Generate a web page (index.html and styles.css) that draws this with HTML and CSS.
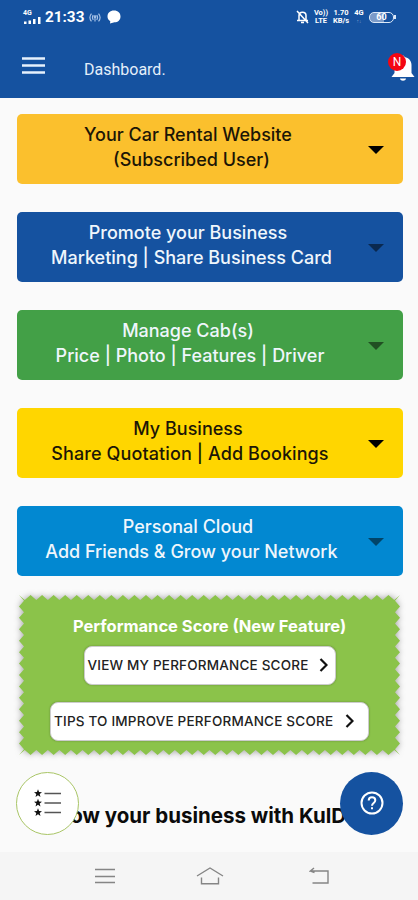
FILE: index.html
```
<!DOCTYPE html>
<html>
<head>
	<title>Dashboard</title>
	<meta charset="utf-8">
	<link rel="stylesheet" href="styles.css">
</head>

<body>
	<div class="top">
		<div class="status">
			<div class="signal">
				<span>4G</span>
				<svg width="19" height="7" viewBox="0 0 19 7"><path d="M1 4.500h2.500V7H1zM5.500 3.500H8V7H5.500zM10 2h2.500v5H10zM15 0h2.500v7H15z" fill="#fff"/></svg>
			</div>
			<span class="clock">21:33</span>
			<svg class="hotspot" width="14" height="11" viewBox="0 0 15 14" fill="none" stroke="#a9c4e8" stroke-width="1.500"><path d="M3 2Q-1 7 3 12M5.300 4Q3.300 7 5.300 10M12 2q4 5 0 10M9.700 4q2 3 0 6M7.500 6v6"/><circle cx="7.500" cy="6" r="1"/></svg>
			<svg width="14" height="14" viewBox="0 0 14 14"><path d="M7 0.500c4 0 6.500 2.500 6.500 6S11 12.300 7.500 12.300L3 13.500l.3-2.300C1.500 10 .5 8.500.5 6.500.5 3 3 .5 7 .5z" fill="#fff"/></svg>
			<div class="status-right">
				<svg width="13" height="14" viewBox="0 0 13 14" fill="none" stroke="#fff" stroke-width="1.500"><path d="M3 10V5.500C3 1 10 1 10 5.500V10M1 10.500h11M5 12.500h3M1 1l11 12"/></svg>
				<span class="tiny volte">Vo))<br>LTE</span>
				<span class="tiny speed">1.70<br>KB/s</span>
				<span class="tiny net">4G<br><i>&uarr;&darr;</i></span>
				<div class="battery"><span>60</span></div>
				<i class="cap"></i>
			</div>
		</div>
		<div class="bar">
			<svg class="menu" width="23" height="17" viewBox="0 0 23 17"><path d="M0 1.500h23M0 8.500h23M0 15.500h23" stroke="#e6f1fc" stroke-width="2.500"/></svg>
			<span class="title">Dashboard.</span>
			<div class="bell">
				<svg width="24" height="28" viewBox="0 0 24 28" fill="#fff"><path d="M10.500 3a1.500 1.500 0 0 1 3 0c4.500.8 7 4 7 8v8l3 4H.5l3-4v-8c0-4 2.500-7.200 7-8zM9 24.500h6c-.3 3-5.700 3-6 0z"/></svg>
				<span class="badge">N</span>
			</div>
		</div>
	</div>

	<div class="cards">
		<div class="card amber"><p>Your Car Rental Website<br><span class="sub">(Subscribed User)</span></p><i class="caret"></i></div>
		<div class="card navy"><p>Promote your Business<br><span class="sub">Marketing | Share Business Card</span></p><i class="caret"></i></div>
		<div class="card green"><p>Manage Cab(s)<br><span class="sub near">Price | Photo | Features | Driver</span></p><i class="caret"></i></div>
		<div class="card yellow"><p>My Business<br><span class="sub near wide">Share Quotation | Add Bookings</span></p><i class="caret"></i></div>
		<div class="card sky"><p>Personal Cloud<br><span class="sub">Add Friends &amp; Grow your Network</span></p><i class="caret"></i></div>
	</div>

	<div class="score">
		<svg class="stamp" width="381" height="160" viewBox="0 0 381 160"><path id="stamp" fill="#8bc34a"/></svg>
		<h2>Performance Score (New Feature)</h2>
		<button class="view"><span>VIEW MY PERFORMANCE SCORE</span><svg width="9" height="14" viewBox="0 0 9 14"><path d="M1.500 1l6 6-6 6" fill="none" stroke="#111" stroke-width="2.200"/></svg></button>
		<button class="tips"><span>TIPS TO IMPROVE PERFORMANCE SCORE</span><svg width="9" height="14" viewBox="0 0 9 14"><path d="M1.500 1l6 6-6 6" fill="none" stroke="#111" stroke-width="2.200"/></svg></button>
	</div>

	<div class="grow">
		<h3>Grow your business with KulD</h3>
		<div class="fab list">
			<svg width="28" height="28" viewBox="0 0 28 28"><path id="stars" fill="#111"/><path d="M10.500 4.500H27M10.500 14H27M10.500 23.500H27" stroke="#555" stroke-width="1.500"/></svg>
		</div>
		<div class="fab help">
			<svg width="24" height="24" viewBox="0 0 24 24" fill="none" stroke="#fff" stroke-width="2"><circle cx="12" cy="12" r="10.500"/><path d="M8.700 9.500c0-4.500 6.600-4.300 6.600-.2 0 2.700-3.300 2.700-3.300 5.500M12 16.300v2"/></svg>
		</div>
	</div>

	<div class="nav">
		<svg width="20" height="16" viewBox="0 0 20 16"><path d="M0 1.500h20M0 8.500h20M0 14.500h20" stroke="#858585" stroke-width="1.500"/></svg>
		<svg width="28" height="18" viewBox="0 0 28 18" fill="none" stroke="#858585" stroke-width="1.400"><path d="M1 9L14 1l13 8M5.500 10.500v6.300h17v-6.300"/></svg>
		<svg width="20" height="18" viewBox="0 0 20 18" fill="none" stroke="#858585" stroke-width="1.400"><path d="M5 1L1.500 4H19v12H3.500M1.500 4l4 1.500"/></svg>
	</div>

<script>
// zigzag edge of the score box
var w = 381, h = 160, nx = 33, ny = 14, depth = 5;
var d = "M0 0", i, sx = w/nx/2, sy = h/ny/2;
for(i=0; i<nx; i++) d += "l" + sx + " " + depth + "l" + sx + " " + (-depth);
for(i=0; i<ny; i++) d += "l" + (-depth) + " " + sy + "l" + depth + " " + sy;
for(i=0; i<nx; i++) d += "l" + (-sx) + " " + (-depth) + "l" + (-sx) + " " + depth;
for(i=0; i<ny; i++) d += "l" + depth + " " + (-sy) + "l" + (-depth) + " " + (-sy);
document.getElementById("stamp").setAttribute("d", d + "z");

// three list stars
var s = "", y, k, r, a;
for(y=4.5; y<28; y+=9.5){
	for(k=0; k<10; k++){
		r = k%2 ? 1.8 : 4.2;
		a = Math.PI*(k/5 - 0.5);
		s += (k ? "L" : "M") + (4 + r*Math.cos(a)) + " " + (y + r*Math.sin(a));
	}
	s += "z";
}
document.getElementById("stars").setAttribute("d", s);
</script>

</body>
</html>
```
FILE: styles.css
```
body {
	margin:0;
	width:418px;
	height:900px;
	overflow:hidden;
	background:#fafafa;
	font-family:Inter, "Liberation Sans", sans-serif;
	display:flex;
	flex-direction:column;
}

p, h2, h3 {
	margin:0;
}

svg {
	display:block;
	flex:none;
}

.top {
	height:98px;
	background:#1552a0;
	color:#fff;
	font-family:Roboto, sans-serif;
	flex:none;
}

.status {
	height:34px;
	display:flex;
	align-items:center;
	padding:0 22px 0 23px;
}

.signal {
	width:22px;
	font-size:7px;
	line-height:7px;
	font-weight:bold;
}

.clock {
	font-size:15.3px;
	font-weight:bold;
	width:43px;
}

.hotspot {
	margin-right:5px;
}

.status-right {
	margin-left:auto;
	display:flex;
	align-items:center;
}

.tiny {
	font-size:7.5px;
	line-height:8px;
	font-weight:bold;
	text-align:center;
}

.tiny i {
	font-size:5px;
	font-style:normal;
	color:#7f9fcf;
}

.volte {
	width:16px;
	margin-left:4px;
}

.speed {
	width:18px;
	margin-left:3px;
}

.net {
	width:10px;
	margin:0 5px 0 4px;
}

.battery {
	width:23px;
	height:9px;
	border:1.5px solid #dce9f8;
	border-radius:5px;
	background:linear-gradient(90deg, #7b9bc9 60%, #1552a0 60%);
	font-size:9px;
	line-height:9px;
	font-weight:bold;
	text-align:center;
}

.cap {
	width:2px;
	height:4px;
	background:#dce9f8;
}

.bar {
	height:64px;
	display:flex;
	align-items:center;
	padding-left:22px;
}

.menu {
	margin-top:-1px;
}

.title {
	margin:6px 0 0 39px;
	font-size:16px;
	color:#e4effa;
}

.bell {
	position:relative;
	margin:4px 3px 0 auto;
}

.badge {
	position:absolute;
	left:-3px;
	top:-1px;
	width:18px;
	height:18px;
	border-radius:50%;
	background:#f40612;
	font-size:12px;
	line-height:18px;
	text-align:center;
}

.cards {
	margin:16.4px 15px 0 16.5px;
	display:flex;
	flex-direction:column;
	gap:28px;
}

.card {
	height:70px;
	border-radius:5px;
	display:flex;
	align-items:center;
	color:#eff6fc;
	font-size:18px;
	line-height:25px;
	font-weight:500;
}

.card p {
	width:343px;
	height:56px;
	padding-top:1px;
	box-sizing:border-box;
	text-align:center;
	white-space:nowrap;
}

.sub {
	padding-left:7px;
}

.near {
	padding-left:4px;
}

.wide {
	letter-spacing:.1px;
}

.caret {
	margin-left:8px;
	margin-top:2px;
	border:8px solid transparent;
	border-top-color:#000;
	border-bottom:0;
	opacity:.5;
}

.amber {
	background:#fbc02d;
	color:#1c1606;
}

.navy {
	background:#1552a0;
}

.green {
	background:#43a047;
}

.yellow {
	background:#ffd600;
	color:#1c1606;
}

.sky {
	background:#0288d1;
}

.amber .caret, .yellow .caret {
	opacity:1;
}

.score {
	position:relative;
	width:381px;
	height:160px;
	margin:18.6px 0 0 19px;
	display:flex;
	flex-direction:column;
	align-items:center;
	flex:none;
}

.stamp {
	position:absolute;
	left:0;
	top:0;
	overflow:visible;
	filter:drop-shadow(0 0 3px rgba(0,0,0,.35));
}

.score h2 {
	position:relative;
	margin-top:20px;
	font-size:16.5px;
	line-height:22px;
	color:#fff;
	white-space:nowrap;
}

.score button {
	position:relative;
	height:39px;
	box-sizing:border-box;
	border:1px solid #ccc;
	border-radius:8px;
	background:#fff;
	box-shadow:0 0 2px rgba(0,0,0,.3);
	display:flex;
	align-items:center;
	justify-content:space-between;
	padding:0 7px 0 3px;
	font:500 13.5px Inter, sans-serif;
	letter-spacing:.2px;
	color:#222;
	white-space:nowrap;
}

.score .view {
	width:252px;
	margin-top:9px;
}

.score .tips {
	width:319px;
	margin-top:17px;
	padding-right:14px;
}

.grow {
	position:relative;
	height:97px;
	flex:none;
}

.grow h3 {
	padding:48px 0 0 47px;
	font-size:20.5px;
	line-height:26px;
	white-space:nowrap;
	color:#0b0b0b;
}

.fab {
	position:absolute;
	top:17px;
	width:63px;
	height:63px;
	box-sizing:border-box;
	border-radius:50%;
	display:flex;
	align-items:center;
	justify-content:center;
}

.list {
	left:16px;
	background:#fff;
	border:1.5px solid #a9c566;
}

.help {
	left:340px;
	background:#1552a0;
}

.nav {
	height:48px;
	background:#f5f5f5;
	display:flex;
	align-items:center;
	padding-left:95px;
	gap:81px;
	flex:none;
}

.nav svg:last-child {
	margin-left:4px;
}
```
